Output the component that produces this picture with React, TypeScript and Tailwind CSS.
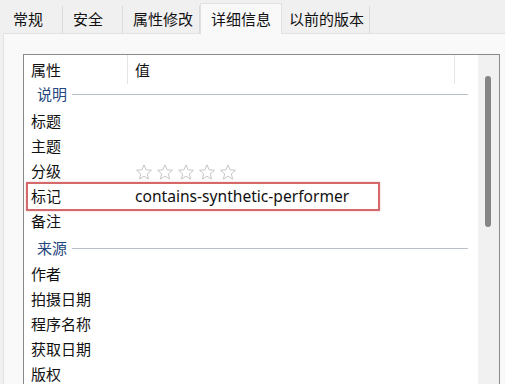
import React from "react";

const tabs = [
  { label: "常规", w: "w-[60px]", pl: "pl-[10px]" },
  { label: "安全", w: "w-[60px]", pl: "pl-[10px]" },
  { label: "属性修改", w: "w-[77px]", pl: "pl-[10px]" },
];

function Star() {
  return (
    <svg width="18" height="18" viewBox="0 0 24 24" className="shrink-0">
      <path
        d="M12 2.5l2.8 6.6 7.1.6-5.4 4.7 1.6 7-6.1-3.7-6.1 3.7 1.6-7L2.1 9.7l7.1-.6z"
        fill="none"
        stroke="#c4c4c4"
        strokeWidth="1.3"
        strokeLinejoin="round"
      />
    </svg>
  );
}

function Group({ label, h }: { label: string; h: string }) {
  return (
    <div className={`flex items-center ${h} pl-[13px] pr-[10px]`}>
      <span className="text-[#26467e]">{label}</span>
      <div className="ml-[5px] h-px flex-1 bg-[#b9c0c9]" />
    </div>
  );
}

function Row({ name, children }: { name: string; children?: React.ReactNode }) {
  return (
    <div className="flex h-[25px] items-center">
      <div className="w-[104px] shrink-0 pl-[7px]">{name}</div>
      <div className="flex items-center gap-[3px] pl-[7px]">{children}</div>
    </div>
  );
}

export default function App() {
  return (
    <div
      className="h-[384px] w-[505px] overflow-hidden bg-[#f0f0f0] text-[15px] text-[#111]"
      style={{ fontFamily: '"Noto Sans", "Noto Sans CJK SC", sans-serif' }}
    >
      {/* tab strip */}
      <div className="flex h-[33px] items-end pl-[3px]">
        {tabs.map((t) => (
          <div
            key={t.label}
            className={`flex h-[27px] items-center border-r border-[#dadada] ${t.w} ${t.pl}`}
          >
            {t.label}
          </div>
        ))}
        <div className="relative z-10 -mb-px flex h-[31px] w-[82px] items-start border border-b-0 border-[#e0e0e0] bg-[#f9f9f9] pl-[10px] pt-[4px]">
          详细信息
        </div>
        <div className="flex h-[27px] w-[88px] items-center border-r border-[#dadada] pl-[7px]">
          以前的版本
        </div>
      </div>

      {/* page */}
      <div className="ml-[3px] h-[351px] border-l border-t border-[#e2e2e2] bg-[#f9f9f9] pl-[19px] pr-[5px] pt-[20px]">
        <div className="flex h-[400px] border border-[#8a8a8a] bg-white">
          <div className="flex-1">
            {/* header */}
            <div className="flex h-[29px]">
              <div className="w-[104px] border-r border-[#e5e5e5] pl-[7px] pt-[4px]">属性</div>
              <div className="w-[327px] border-r border-[#e5e5e5] pl-[7px] pt-[4px]">值</div>
            </div>
            <Group label="说明" h="h-[25px] pb-[4px]" />
            <Row name="标题" />
            <Row name="主题" />
            <Row name="分级">
              <Star />
              <Star />
              <Star />
              <Star />
              <Star />
            </Row>
            <div className="relative">
              <Row name="标记">
                <span className="text-[15.6px] text-[#111]">contains-synthetic-performer</span>
              </Row>
              <div className="pointer-events-none absolute left-[2px] top-[-2px] h-[29px] w-[354px] border-2 border-[#d4686a] shadow-[0_0_2px_rgba(212,104,106,0.4)]" />
            </div>
            <Row name="备注" />
            <Group label="来源" h="h-[28px]" />
            <Row name="作者" />
            <Row name="拍摄日期" />
            <Row name="程序名称" />
            <Row name="获取日期" />
            <Row name="版权" />
          </div>
          {/* scrollbar */}
          <div className="w-[21px] bg-[#f1f1f1] pt-[21px]">
            <div className="ml-[7px] h-[151px] w-[6px] rounded-[3px] bg-[#858585]" />
          </div>
        </div>
      </div>
    </div>
  );
}
